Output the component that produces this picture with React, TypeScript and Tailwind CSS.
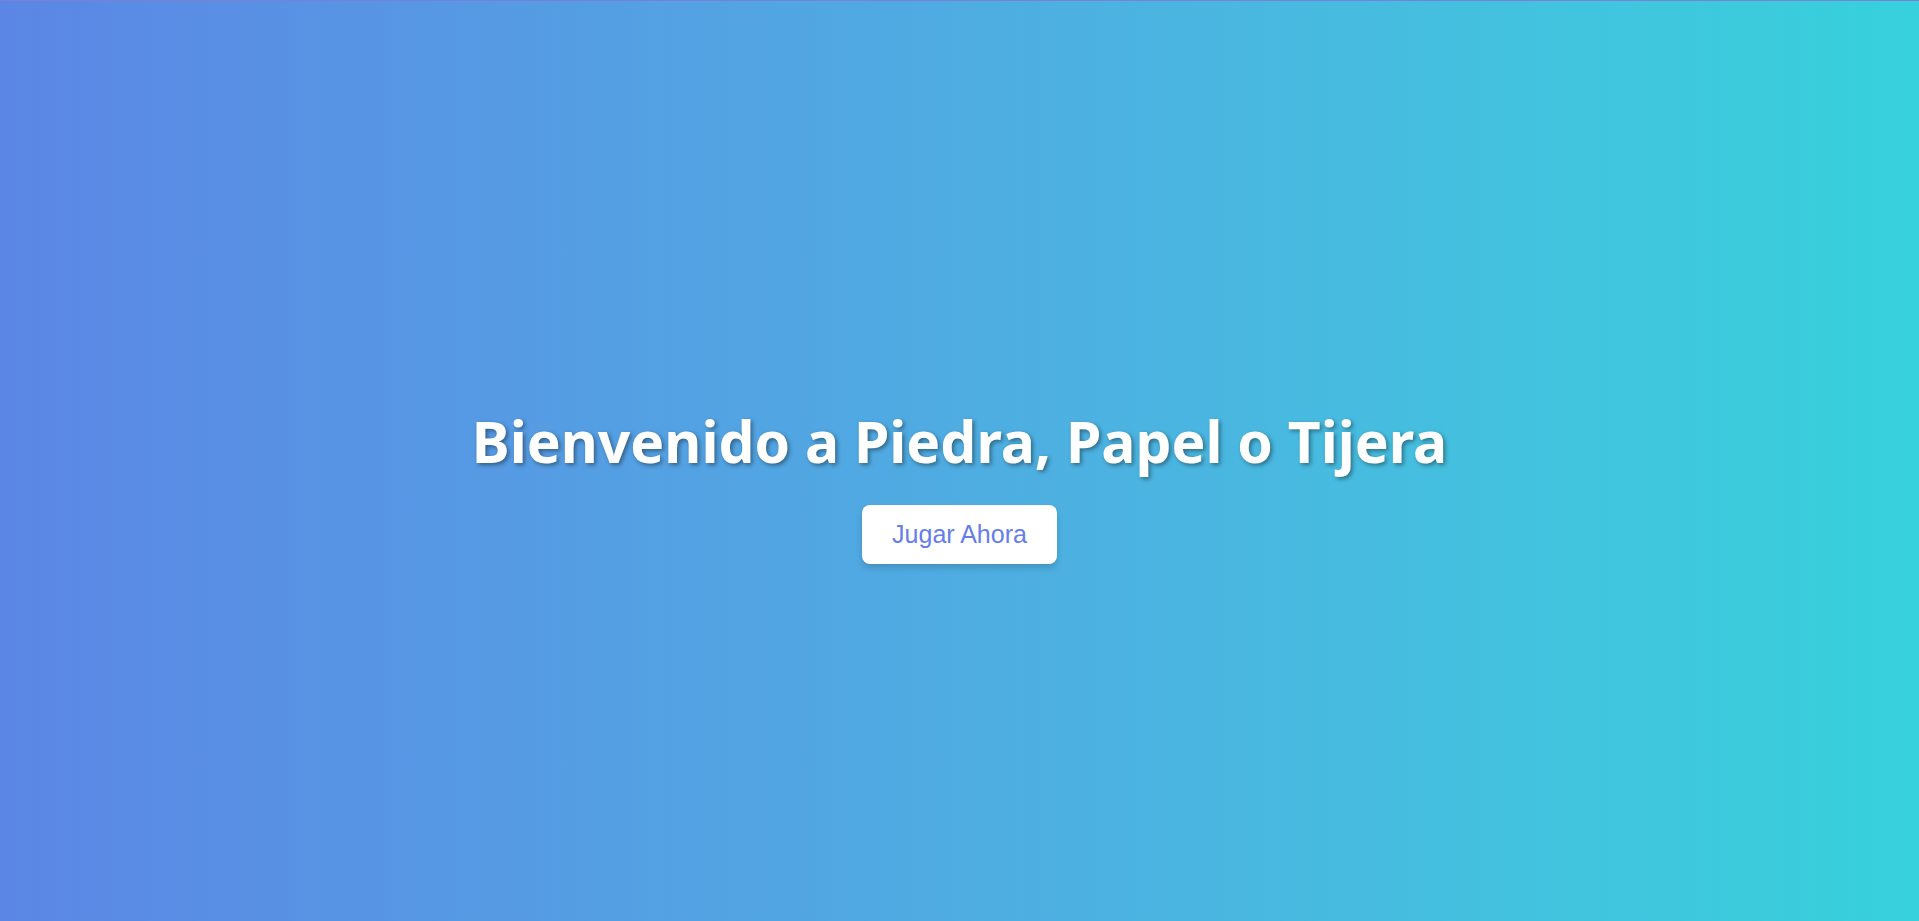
const App = () => {
    return (
        <div className="min-h-screen w-full border-t border-[#7b7fd8] bg-gradient-to-r from-[#5b86e5] to-[#36d1dc] flex flex-col items-center justify-center pt-[49px] font-['Liberation_Sans',Arial,sans-serif]">
            <h1 className="text-[57px] leading-[1.2] font-bold text-white font-['Noto_Sans','Open_Sans',sans-serif] [text-shadow:2px_2px_4px_rgba(0,0,0,0.4)] mb-[30px]">
                Bienvenido a Piedra, Papel o Tijera
            </h1>
            <button className="bg-white text-[#667eea] text-[25px] leading-[29px] px-[30px] py-[15px] rounded-lg shadow-[0_4px_6px_rgba(0,0,0,0.15)]">
                Jugar Ahora
            </button>
        </div>
    );
};

export default App;
